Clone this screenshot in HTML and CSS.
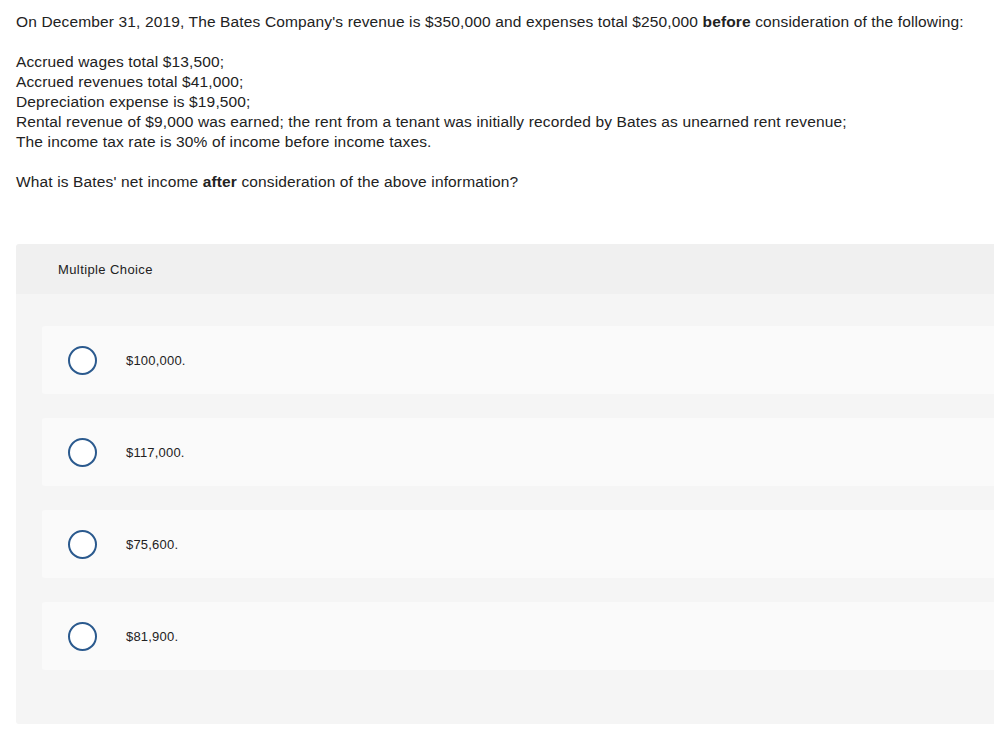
FILE: index.html
```html
<!DOCTYPE html>
<html>
<head>
<meta charset="utf-8">
<link rel="stylesheet" href="styles.css">
</head>
<body>
<div class="question">
  <p>On December 31, 2019, The Bates Company's revenue is $350,000 and expenses total $250,000 <b>before</b> consideration of the following:</p>
  <p>Accrued wages total $13,500;<br>Accrued revenues total $41,000;<br>Depreciation expense is $19,500;<br>Rental revenue of $9,000 was earned; the rent from a tenant was initially recorded by Bates as unearned rent revenue;<br>The income tax rate is 30% of income before income taxes.</p>
  <p>What is Bates' net income <b>after</b> consideration of the above information?</p>
</div>
<div class="panel">
  <div class="panel-head">Multiple Choice</div>
  <div class="panel-body">
    <div class="option"><span class="radio"></span><span class="label">$100,000.</span></div>
    <div class="option"><span class="radio"></span><span class="label">$117,000.</span></div>
    <div class="option"><span class="radio"></span><span class="label">$75,600.</span></div>
    <div class="option"><span class="radio"></span><span class="label">$81,900.</span></div>
  </div>
</div>
</body>
</html>
```
FILE: styles.css
```css
html, body {
  margin: 0;
  padding: 0;
  overflow: hidden;
  background: #ffffff;
}
body {
  font-family: "Liberation Sans", Arial, sans-serif;
  color: #222222;
}
.question {
  padding: 12px 16px 0 16px;
  font-size: 15.5px;
  line-height: 20px;
  letter-spacing: 0.14px;
}
.question p {
  margin: 0 0 20px 0;
}
.question p:last-child {
  margin-bottom: 0;
}
.question b {
  font-weight: bold;
}
.panel {
  margin-top: 52px;
  margin-left: 16px;
  width: 1000px;
  border-radius: 3px;
  overflow: hidden;
}
.panel-head {
  height: 50px;
  background: #f0f0f0;
  display: flex;
  align-items: center;
  padding-left: 42px;
  font-size: 13px;
  letter-spacing: 0.4px;
  color: #222222;
}
.panel-body {
  background: #f5f5f5;
  padding: 32px 0 54px 26px;
  display: flex;
  flex-direction: column;
  gap: 24px;
}
.option {
  height: 68px;
  background: #fafafa;
  border-radius: 3px 0 0 3px;
  display: flex;
  align-items: center;
  padding-left: 26px;
}
.radio {
  width: 25px;
  height: 25px;
  border: 2px solid #2b5a8e;
  border-radius: 50%;
  background: #ffffff;
  flex: none;
}
.label {
  margin-left: 29px;
  font-size: 13px;
  letter-spacing: 0.2px;
  color: #222222;
}
```
